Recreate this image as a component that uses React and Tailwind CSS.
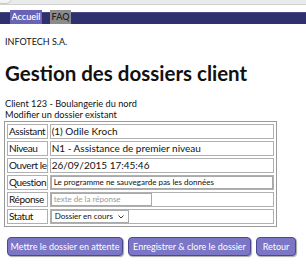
export default function App() {
  const rows = [
    { label: "Assistant", value: "(1) Odile Kroch" },
    { label: "Niveau", value: "N1 - Assistance de premier niveau" },
    { label: "Ouvert le", value: "26/09/2015 17:45:46" },
  ];
  const lab = "border border-[#b0b0b0] h-[15px] pl-[1px] pr-0 leading-[13px] whitespace-nowrap tracking-[-0.4px]";
  return (
    <div className="w-[306px] h-[266px] bg-white overflow-hidden text-[#111] font-['Lato','Open_Sans',sans-serif]">
      <div className="h-[5px] bg-[#e9ebea] border-b border-[#d2d3d0] relative">
        <div className="absolute -left-[4px] -top-[8px] w-[16px] h-[12px] rounded-full border border-[#c9c9c9] bg-[#f4f4f4]" />
      </div>
      <div className="mt-[7px] h-[12px] bg-[#2f306e] border-t border-[#4a4a86] flex pl-[10px] gap-[8px]">
        <div className="-mt-[3px] h-[14px] w-[32px] bg-[#6863b6] text-white text-[9px] font-semibold flex items-center justify-center">Accueil</div>
        <div className="-mt-[3px] h-[14px] w-[21px] bg-[#8b8b8b] text-[#222] text-[9px] font-semibold flex items-center justify-center">FAQ</div>
      </div>
      <div className="px-[5px]">
        <div className="mt-[12px] text-[9px] leading-[11px]">INFOTECH S.A.</div>
        <div className="mt-[14px] text-[20.5px] leading-[24px] font-bold">Gestion des dossiers client</div>
        <div className="mt-[13px] text-[9.2px] leading-[11px]">Client 123 - Boulangerie du nord</div>
        <div className="text-[9.2px] leading-[11px]">Modifier un dossier existant</div>
        <table className="-ml-[1px] mt-[1px] w-[273px] border border-[#9a9a9a] border-separate border-spacing-[2px] text-[10px]">
          <tbody>
            {rows.map((r) => (
              <tr key={r.label}>
                <td className={lab + " w-[38px]"}>{r.label}</td>
                <td className="border border-[#b0b0b0] h-[15px] px-[1px] leading-[13px] whitespace-nowrap">{r.value}</td>
              </tr>
            ))}
            <tr>
              <td className={lab}>Question</td>
              <td className="border border-[#b0b0b0] h-[15px] p-0">
                <div className="h-[13px] border border-[#a9a9a9] text-[8px] leading-[11px] px-[2px] whitespace-nowrap">Le programme ne sauvegarde pas les données</div>
              </td>
            </tr>
            <tr>
              <td className={lab}>Réponse</td>
              <td className="border border-[#b0b0b0] h-[15px] p-0">
                <div className="h-[13px] w-[101px] border border-[#a9a9a9] text-[8px] leading-[11px] px-[2px] text-[#9a9a9a] whitespace-nowrap">texte de la réponse</div>
              </td>
            </tr>
            <tr>
              <td className={lab}>Statut</td>
              <td className="border border-[#b0b0b0] h-[15px] p-0">
                <div className="h-[13px] w-[78px] border border-[#a9a9a9] text-[8px] leading-[11px] pl-[3px] pr-[4px] flex items-center justify-between whitespace-nowrap">
                  <span>Dossier en cours</span>
                  <svg width="6" height="4" viewBox="0 0 6 4"><path d="M0.5 0.5 L3 3 L5.5 0.5" fill="none" stroke="#333" strokeWidth="1" /></svg>
                </div>
              </td>
            </tr>
          </tbody>
        </table>
        <div className="mt-[10px] flex gap-[5px] pl-[2px]">
          <button className="h-[19px] w-[116px] rounded-[4px] bg-[#7b76c6] border border-[#4b4794] shadow-[1px_1px_1px_rgba(0,0,0,0.35)] text-white text-[9px]">Mettre le dossier en attente</button>
          <button className="h-[19px] w-[123px] rounded-[4px] bg-[#7b76c6] border border-[#4b4794] shadow-[1px_1px_1px_rgba(0,0,0,0.35)] text-white text-[9px]">Enregistrer &amp; clore le dossier</button>
          <button className="h-[19px] w-[40px] rounded-[4px] bg-[#7b76c6] border border-[#4b4794] shadow-[1px_1px_1px_rgba(0,0,0,0.35)] text-white text-[9px]">Retour</button>
        </div>
      </div>
    </div>
  );
}
